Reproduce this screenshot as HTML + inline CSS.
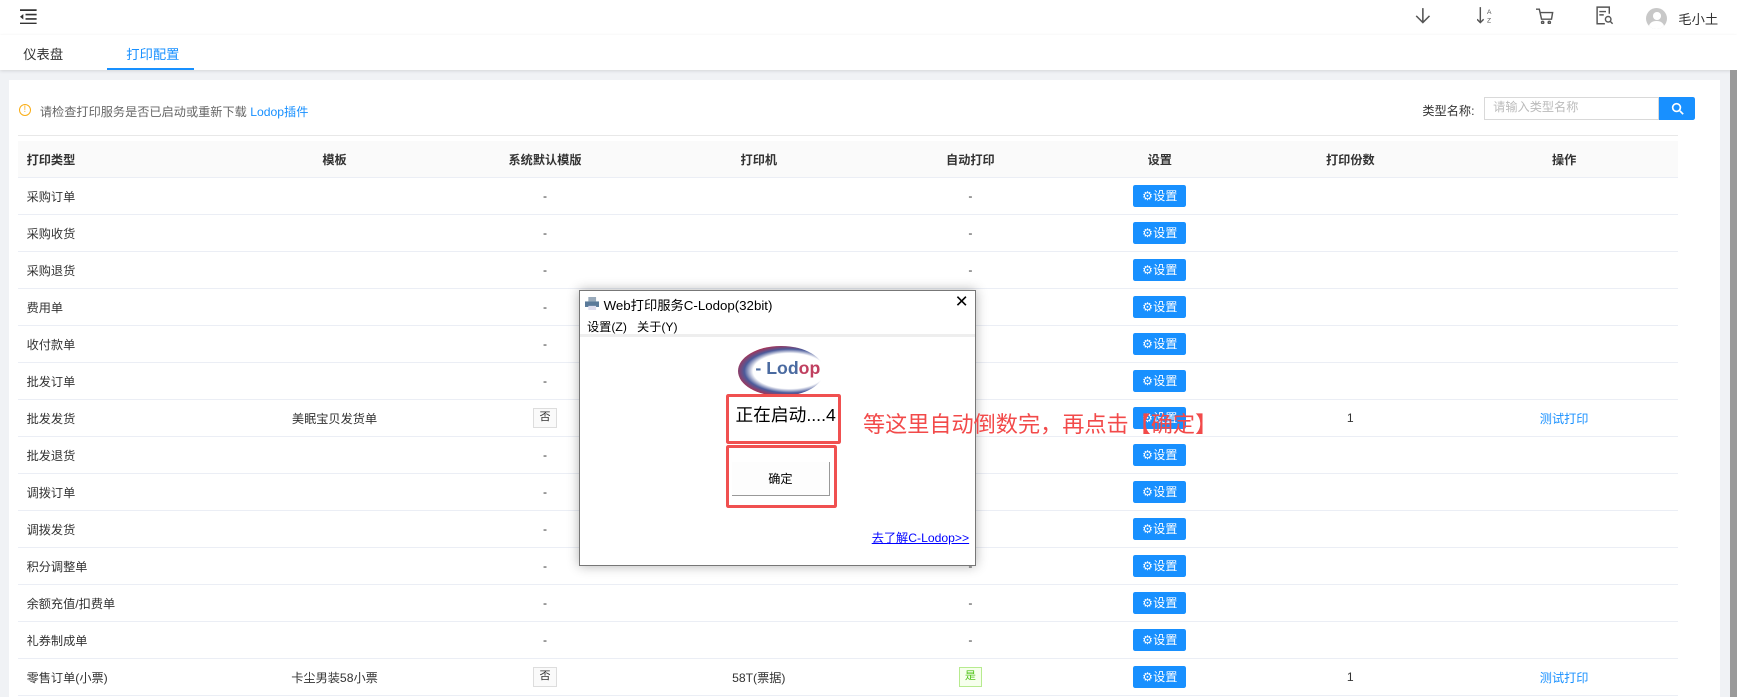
<!DOCTYPE html>
<html><head><meta charset="utf-8"><style>
*{box-sizing:border-box;margin:0;padding:0}
html,body{width:1737px;height:697px;overflow:hidden;background:#f0f2f5}
#w{width:1568px;height:629px;zoom:1.10778;position:relative;overflow:hidden;font-family:"Liberation Sans","Noto Sans CJK SC",sans-serif;font-size:12px;color:#333}
.hdr{position:absolute;left:0;top:0;width:1568px;height:32px;background:#fff}
.tabs{position:absolute;left:0;top:32px;width:1568px;height:31px;background:#fff;box-shadow:0 1px 3px rgba(0,0,0,.12)}
.tab{position:absolute;top:8px;font-size:12px}
.card{position:absolute;left:8px;top:72px;width:1545px;height:557px;background:#fff}
.sb{position:absolute;left:1562px;top:63px;width:6px;height:566px;background:#9a9a9a}
table{position:absolute;left:16px;top:127px;border-collapse:collapse;width:1499px}
td,th{height:33.4px;border-bottom:1px solid #ebeef5;text-align:center;font-size:11px;color:#333}
th{background:#fafafa;font-weight:bold}
td:first-child,th:first-child{text-align:left;padding-left:8px}
.b{display:inline-block;background:#1890ff;color:#fff;width:48px;height:20px;line-height:20px;border-radius:2px;font-size:11px}
.n{display:inline-block;border:1px solid #ddd;background:#fafafa;width:21px;height:18px;line-height:16px;font-size:10px}
.y{display:inline-block;border:1px solid #b7eb8f;background:#f6ffed;color:#52c41a;width:21px;height:18px;line-height:16px;font-size:10px}
a{color:#1890ff;text-decoration:none}
.dlg{position:absolute;left:523px;top:262px;width:358px;height:249px;background:#fff;border:1px solid #777;box-shadow:0 0 10px rgba(0,0,0,.3)}
.rb{position:absolute;border:3px solid #f05050;border-radius:2px}
</style></head><body><div id="w">
<div class="hdr">
<svg style="position:absolute;left:18px;top:8px" width="16" height="14"><path d="M0 1h15M5 5h10M5 9h10M0 13h15" stroke="#333" stroke-width="1.5"/><path d="M0 7l3-2.5v5z" fill="#333"/></svg>
<svg style="position:absolute;left:1276px;top:6px" width="16" height="16" fill="none" stroke="#555" stroke-width="1.4"><path d="M8 1v13M2 8l6 6 6-6"/></svg>
<svg style="position:absolute;left:1333px;top:5px" width="16" height="18" fill="none" stroke="#555" stroke-width="1.3"><path d="M3 1v14M0 12l3 3 3-3"/><text x="9" y="7" font-size="6" fill="#555" stroke="none">A</text><text x="9" y="15" font-size="6" fill="#555" stroke="none">Z</text></svg>
<svg style="position:absolute;left:1387px;top:6px" width="16" height="16" fill="none" stroke="#555" stroke-width="1.3"><path d="M0 2h3l2 9h9l1-6H4"/><circle cx="6" cy="14" r="1"/><circle cx="12" cy="14" r="1"/></svg>
<svg style="position:absolute;left:1441px;top:5px" width="16" height="18" fill="none" stroke="#555" stroke-width="1.3"><path d="M12 7V1H1v15h7M3 5h6M3 8h4"/><circle cx="11" cy="12" r="2.5"/><path d="M13 14l2 2"/></svg>
<div style="position:absolute;left:1486px;top:7px;width:19px;height:19px;border-radius:50%;background:#c8c8c8;overflow:hidden"><div style="position:absolute;left:6px;top:4px;width:7px;height:7px;border-radius:50%;background:#fff"></div><div style="position:absolute;left:3px;top:12px;width:13px;height:10px;border-radius:50%;background:#fff"></div></div>
<div style="position:absolute;left:1515px;top:8px;font-size:12px">毛小土</div>
</div>
<div class="tabs">
<div class="tab" style="left:21px">仪表盘</div>
<div class="tab" style="left:114px;color:#1890ff">打印配置</div>
<div style="position:absolute;left:97px;top:29px;width:78px;height:2px;background:#1890ff"></div>
</div>
<div class="sb"></div>
<div class="card">
<div style="position:absolute;left:9px;top:22px;width:11px;height:11px;border:1px solid #faad14;border-radius:50%;color:#faad14;font-size:8px;line-height:9px;text-align:center">!</div>
<div style="position:absolute;left:28px;top:20px;color:#666;font-size:11px">请检查打印服务是否已启动或重新下载 <a>Lodop插件</a></div>
<div style="position:absolute;left:1276px;top:19px;font-size:11px">类型名称:</div>
<div style="position:absolute;left:1332px;top:16px;width:158px;height:20px;border:1px solid #d9d9d9;color:#bbb;padding-left:7px;line-height:18px;font-size:11px">请输入类型名称</div>
<div style="position:absolute;left:1490px;top:16px;width:32px;height:20px;background:#1890ff;border-radius:0 2px 2px 0"><svg style="position:absolute;left:10px;top:4px" width="12" height="12" fill="none" stroke="#fff" stroke-width="1.5"><circle cx="5" cy="5" r="3.5"/><path d="M8 8l3 3"/></svg></div>
<div style="position:absolute;left:8px;top:50px;width:1499px;height:1px;background:#e8e8e8"></div>
</div>
<table>
<colgroup><col style="width:187px"><col style="width:198px"><col style="width:182px"><col style="width:204px"><col style="width:178px"><col style="width:164px"><col style="width:180px"><col></colgroup>
<tr><th>打印类型</th><th>模板</th><th>系统默认模版</th><th>打印机</th><th>自动打印</th><th>设置</th><th>打印份数</th><th>操作</th></tr>
<tr><td>采购订单</td><td></td><td>-</td><td></td><td>-</td><td><span class="b">⚙设置</span></td><td></td><td></td></tr>
<tr><td>采购收货</td><td></td><td>-</td><td></td><td>-</td><td><span class="b">⚙设置</span></td><td></td><td></td></tr>
<tr><td>采购退货</td><td></td><td>-</td><td></td><td>-</td><td><span class="b">⚙设置</span></td><td></td><td></td></tr>
<tr><td>费用单</td><td></td><td>-</td><td></td><td>-</td><td><span class="b">⚙设置</span></td><td></td><td></td></tr>
<tr><td>收付款单</td><td></td><td>-</td><td></td><td>-</td><td><span class="b">⚙设置</span></td><td></td><td></td></tr>
<tr><td>批发订单</td><td></td><td>-</td><td></td><td>-</td><td><span class="b">⚙设置</span></td><td></td><td></td></tr>
<tr><td>批发发货</td><td>美眠宝贝发货单</td><td><span class="n">否</span></td><td></td><td></td><td><span class="b">⚙设置</span></td><td>1</td><td><a>测试打印</a></td></tr>
<tr><td>批发退货</td><td></td><td>-</td><td></td><td>-</td><td><span class="b">⚙设置</span></td><td></td><td></td></tr>
<tr><td>调拨订单</td><td></td><td>-</td><td></td><td>-</td><td><span class="b">⚙设置</span></td><td></td><td></td></tr>
<tr><td>调拨发货</td><td></td><td>-</td><td></td><td>-</td><td><span class="b">⚙设置</span></td><td></td><td></td></tr>
<tr><td>积分调整单</td><td></td><td>-</td><td></td><td>-</td><td><span class="b">⚙设置</span></td><td></td><td></td></tr>
<tr><td>余额充值/扣费单</td><td></td><td>-</td><td></td><td>-</td><td><span class="b">⚙设置</span></td><td></td><td></td></tr>
<tr><td>礼券制成单</td><td></td><td>-</td><td></td><td>-</td><td><span class="b">⚙设置</span></td><td></td><td></td></tr>
<tr><td>零售订单(小票)</td><td>卡尘男装58小票</td><td><span class="n">否</span></td><td>58T(票据)</td><td><span class="y">是</span></td><td><span class="b">⚙设置</span></td><td>1</td><td><a>测试打印</a></td></tr>
</table>
<div class="dlg">
<svg style="position:absolute;left:4px;top:5px" width="13" height="12"><rect x="3" y="0" width="7" height="4" fill="#9ab"/><rect x="0" y="4" width="13" height="5" fill="#5a7a9a"/><rect x="3" y="8" width="7" height="4" fill="#dde"/></svg>
<div style="position:absolute;left:21px;top:3px;font-size:12px;color:#000">Web打印服务C-Lodop(32bit)</div>
<div style="position:absolute;left:338px;top:1px;font-size:15px;color:#000">✕</div>
<div style="position:absolute;left:6px;top:23px;font-size:11px;color:#000">设置(Z)&nbsp;&nbsp;&nbsp;关于(Y)</div>
<div style="position:absolute;left:0;top:39px;width:356px;height:2px;background:#eee"></div>
<div style="position:absolute;left:142px;top:49px;width:78px;height:46px;border-radius:50%;background:radial-gradient(ellipse at 60% 50%,#fff 50%,#4a5a9a 62%,#b03050 75%,#fff 80%)"></div>
<div style="position:absolute;left:158px;top:60px;font-size:16px;font-weight:bold;color:#4a6aa0">- Lod<span style="color:#c04060">op</span></div>
<div style="position:absolute;left:140px;top:99px;font-size:16px;color:#000">正在启动....4</div>
<div style="position:absolute;left:137px;top:154px;width:88px;height:31px;background:#fdfdfd;border-right:1px solid #999;border-bottom:1px solid #999;text-align:center;line-height:31px;font-size:11px;color:#000">确定</div>
<div style="position:absolute;left:263px;top:214px;font-size:11px;color:#00f;text-decoration:underline">去了解C-Lodop&gt;&gt;</div>
</div>
<div class="rb" style="left:655px;top:356px;width:104px;height:45px"></div>
<div class="rb" style="left:655px;top:402px;width:101px;height:57px"></div>
<div style="position:absolute;left:779px;top:367px;font-size:20px;color:#f24a4a">等这里自动倒数完，再点击【确定】</div>
</div></body></html>
